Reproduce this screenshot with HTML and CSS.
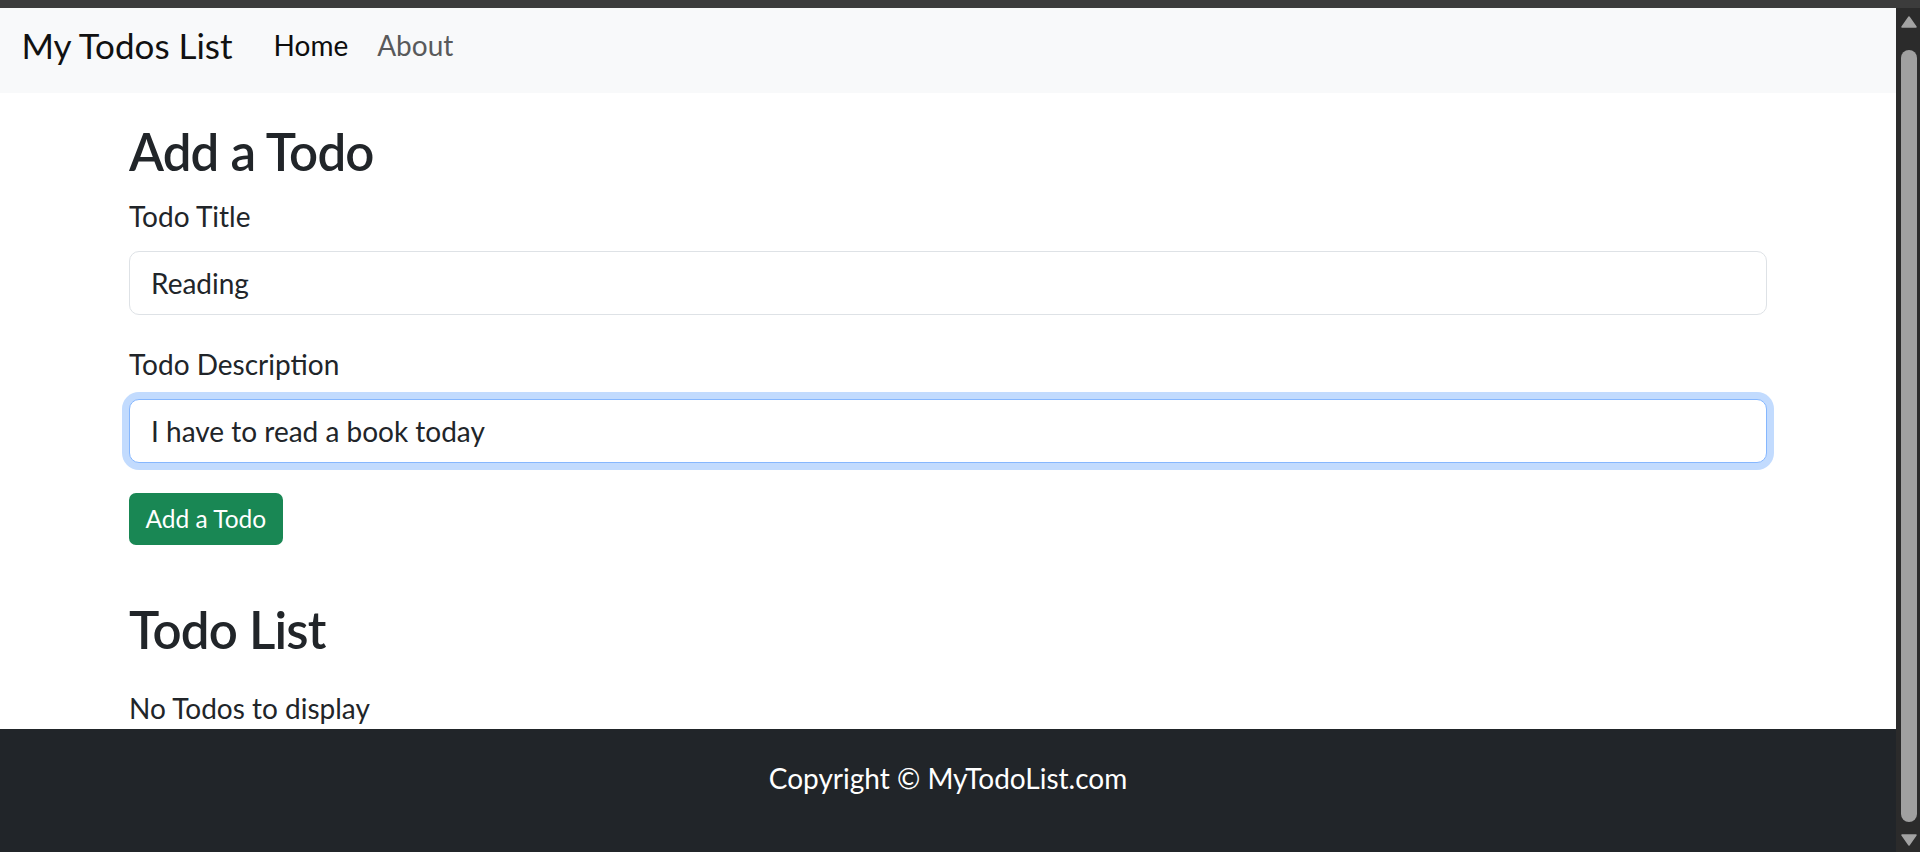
FILE: index.html
```html
<!DOCTYPE html>
<html lang="en">
<head>
<meta charset="utf-8">
<title>My Todos List</title>
<link rel="stylesheet" href="styles.css">
</head>
<body>
<div class="chrome-bar"></div>
<div class="frame">
  <div class="page">
    <nav class="navbar">
      <a class="brand" href="#">My Todos List</a>
      <ul class="nav-links">
        <li><a class="nav-link active" href="#">Home</a></li>
        <li><a class="nav-link" href="#">About</a></li>
      </ul>
    </nav>
    <main class="container">
      <h2 class="heading">Add a Todo</h2>
      <form class="todo-form">
        <div class="field">
          <label class="field-label" for="title">Todo Title</label>
          <input class="field-input" id="title" type="text" value="Reading">
        </div>
        <div class="field">
          <label class="field-label" for="desc">Todo Description</label>
          <input class="field-input focused" id="desc" type="text" value="I have to read a book today">
        </div>
        <button class="btn-add" type="button">Add a Todo</button>
      </form>
      <h2 class="heading list-heading">Todo List</h2>
      <p class="empty">No Todos to display</p>
    </main>
    <footer class="footer">
      <p class="copyright">Copyright &copy; MyTodoList.com</p>
    </footer>
  </div>
  <div class="scrollbar">
    <svg class="arrow" width="16" height="12" viewBox="0 0 16 12"><path d="M8 1 L15 11 L1 11 Z" fill="#a3a3a3" stroke="#a3a3a3" stroke-width="1.5" stroke-linejoin="round"/></svg>
    <div class="thumb"></div>
    <svg class="arrow" width="16" height="12" viewBox="0 0 16 12"><path d="M1 1 L15 1 L8 11 Z" fill="#a3a3a3" stroke="#a3a3a3" stroke-width="1.5" stroke-linejoin="round"/></svg>
  </div>
</div>
</body>
</html>
```
FILE: styles.css
```css
* { box-sizing: border-box; }
html, body {
  margin: 0;
  padding: 0;
  height: 852px;
  overflow: hidden;
}
body {
  font-family: "Lato", "Open Sans", sans-serif;
  font-size: 28px;
  line-height: 42px;
  color: #212529;
  background: #ffffff;
}
.chrome-bar {
  height: 8px;
  background: #3c3c3c;
}
.frame {
  display: flex;
  height: 844px;
}
.page {
  flex: 1;
  display: flex;
  flex-direction: column;
  min-width: 0;
}
.navbar {
  height: 85px;
  background: #f8f9fa;
  display: flex;
  align-items: flex-start;
  padding-left: 21.5px;
}
.brand {
  font-size: 35px;
  line-height: 50px;
  padding-top: 12px;
  color: #111111;
  text-decoration: none;
  margin-right: 26.5px;
}
.nav-links {
  list-style: none;
  margin: 0;
  padding: 16px 0 0 0;
  display: flex;
  gap: 0;
}
.nav-link {
  display: block;
  padding: 0 14.5px;
  font-size: 28px;
  line-height: 42px;
  color: #595a5b;
  text-decoration: none;
}
.nav-link.active { color: #0d0d0d; }
.container {
  width: 1638px;
  margin-left: 129px;
  padding-top: 28px;
  flex: 1;
}
.heading {
  margin: 0 0 12px 0;
  font-size: 51px;
  line-height: 62px;
  font-weight: 600;
  letter-spacing: -0.8px;
  color: #212529;
}
.todo-form { margin: 0; }
.field { margin-bottom: 28px; }
.field-label {
  display: block;
  margin-bottom: 14px;
}
.field-input {
  display: block;
  width: 100%;
  height: 64px;
  padding: 0 21px;
  font-family: inherit;
  font-size: 28px;
  color: #212529;
  background: #ffffff;
  border: 1.5px solid #dee2e6;
  border-radius: 10px;
  outline: none;
}
.field-input.focused {
  border-color: #86b7fe;
  box-shadow: 0 0 0 7px rgba(13, 110, 253, 0.25);
}
.btn-add {
  margin-top: 2px;
  height: 52px;
  padding: 0 16.5px;
  font-family: inherit;
  font-size: 24.5px;
  color: #ffffff;
  background: #198754;
  border: none;
  border-radius: 7px;
}
.list-heading {
  margin-top: 54px;
  margin-bottom: 26px;
}
.empty { margin: 0; }
.footer {
  height: 124px;
  background: #212529;
  color: #ffffff;
  padding-top: 28px;
  text-align: center;
}
.copyright { margin: 0; }
.scrollbar {
  width: 24px;
  background: #2b2b2b;
  display: flex;
  flex-direction: column;
  align-items: flex-start;
  padding: 8px 0 6px 5px;
}
.thumb {
  width: 16px;
  margin: 22px 0 12px 0;
  flex: 1;
  background: #a0a0a0;
  border-radius: 8px;
}
```
